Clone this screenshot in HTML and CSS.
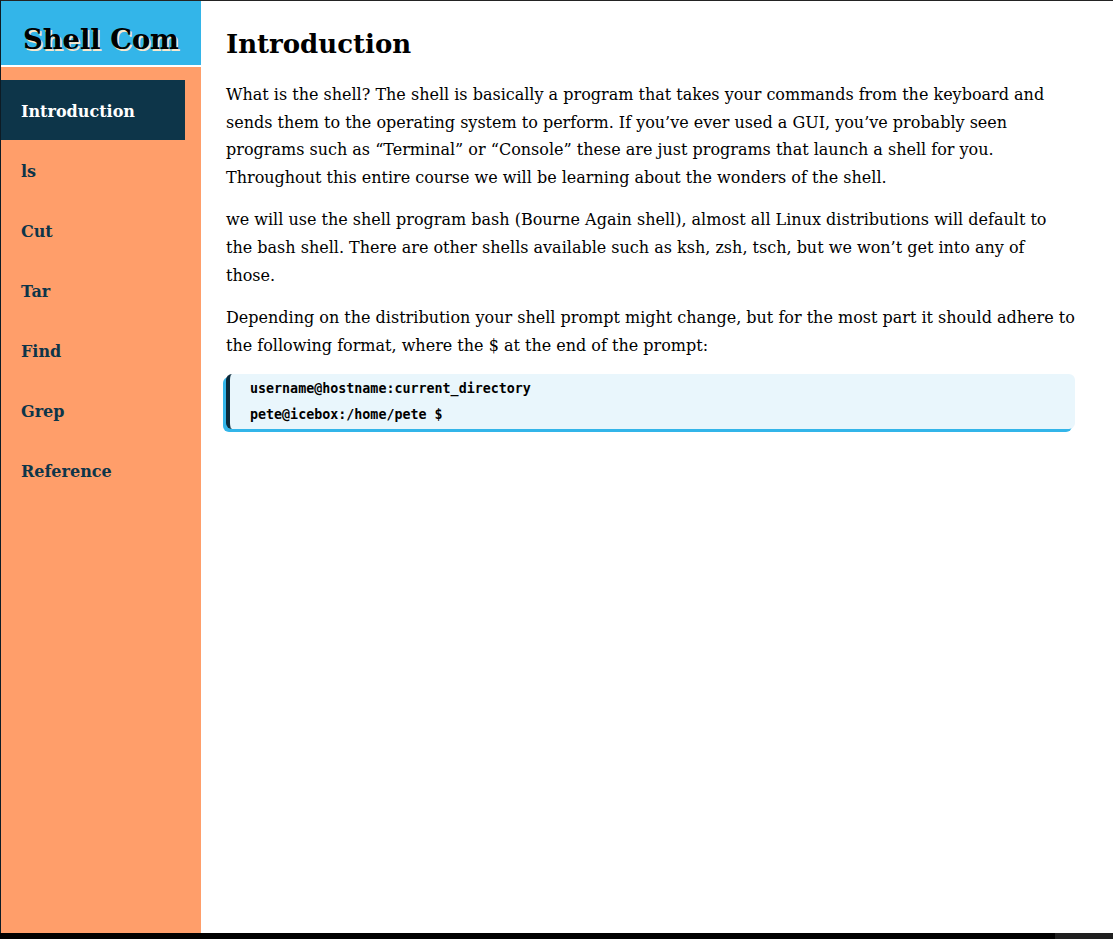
FILE: index.html
```html
<!DOCTYPE html>
<html lang="en">
<head>
<meta charset="utf-8">
<title>Shell Commands</title>
<link rel="stylesheet" href="styles.css">
</head>
<body>
<div class="page">
  <div class="frame">
    <nav class="sidebar">
      <header class="brand">Shell Com</header>
      <ul class="nav">
        <li class="nav-item active">Introduction</li>
        <li class="nav-item">ls</li>
        <li class="nav-item">Cut</li>
        <li class="nav-item">Tar</li>
        <li class="nav-item">Find</li>
        <li class="nav-item">Grep</li>
        <li class="nav-item">Reference</li>
      </ul>
    </nav>
    <main class="main">
      <h1 class="title">Introduction</h1>
      <p class="text">What is the shell? The shell is basically a program that takes your commands from the keyboard and sends them to the operating system to perform. If you’ve ever used a GUI, you’ve probably seen programs such as “Terminal” or “Console” these are just programs that launch a shell for you. Throughout this entire course we will be learning about the wonders of the shell.</p>
      <p class="text">we will use the shell program bash (Bourne Again shell), almost all Linux distributions will default to the bash shell. There are other shells available such as ksh, zsh, tsch, but we won’t get into any of those.</p>
      <p class="text">Depending on the distribution your shell prompt might change, but for the most part it should adhere to the following format, where the $ at the end of the prompt:</p>
      <div class="code">
        <div class="code-line">username@hostname:current_directory</div>
        <div class="code-line">pete@icebox:/home/pete $</div>
      </div>
    </main>
  </div>
  <div class="bottom">
    <div class="bottom-main"></div>
    <div class="bottom-end"></div>
  </div>
</div>
</body>
</html>
```
FILE: styles.css
```css
* { box-sizing: border-box; }
html, body { margin: 0; padding: 0; }
body {
  width: 1113px;
  height: 939px;
  overflow: hidden;
  background: #fff;
  font-family: "DejaVu Serif", serif;
}
.page {
  display: flex;
  flex-direction: column;
  height: 939px;
}
.frame {
  flex: 1;
  display: flex;
  border-top: 1px solid #232323;
  border-left: 1px solid #0d1b24;
  min-height: 0;
}
.sidebar {
  width: 200px;
  flex: none;
  background: #ff9e6a;
  display: flex;
  flex-direction: column;
}
.brand {
  height: 66px;
  background: #33b5e9;
  border-bottom: 2px solid #fff;
  padding-top: 22px;
  text-align: center;
  font-family: "DejaVu Serif", serif;
  font-weight: bold;
  font-size: 27.3px;
  line-height: normal;
  color: #000;
  text-shadow: 1.5px 1.5px 0 #f7e9cf;
  white-space: nowrap;
  overflow: hidden;
}
.nav {
  list-style: none;
  margin: 13px 0 0;
  padding: 0;
}
.nav-item {
  height: 60px;
  padding-top: 4px;
  line-height: 56px;
  padding-left: 20px;
  margin-right: 16px;
  font-size: 16px;
  font-weight: bold;
  color: #0d3549;
}
.nav-item.active {
  background: #0d3549;
  color: #fff;
}
.main {
  flex: 1;
  padding: 0 38px 0 25px;
  color: #000;
}
.title {
  font-size: 26px;
  font-weight: bold;
  line-height: normal;
  margin: 28px 0 22px;
}
.text {
  font-size: 16px;
  line-height: 27.6px;
  margin: 15px 0;
}
.code {
  margin-top: 15px;
  background: #e9f6fc;
  border-left: 4px solid #0a2a3b;
  border-radius: 6px;
  box-shadow: -3px 3px 0 #33b5e9;
  padding: 2px 20px 1px;
  font-family: "DejaVu Sans Mono", monospace;
  font-weight: bold;
  font-size: 13.33px;
  line-height: 26px;
}
.bottom {
  height: 6px;
  display: flex;
  flex: none;
}
.bottom-main { flex: 1; background: #000; }
.bottom-end { width: 58px; background: #1f1f1f; }
```
